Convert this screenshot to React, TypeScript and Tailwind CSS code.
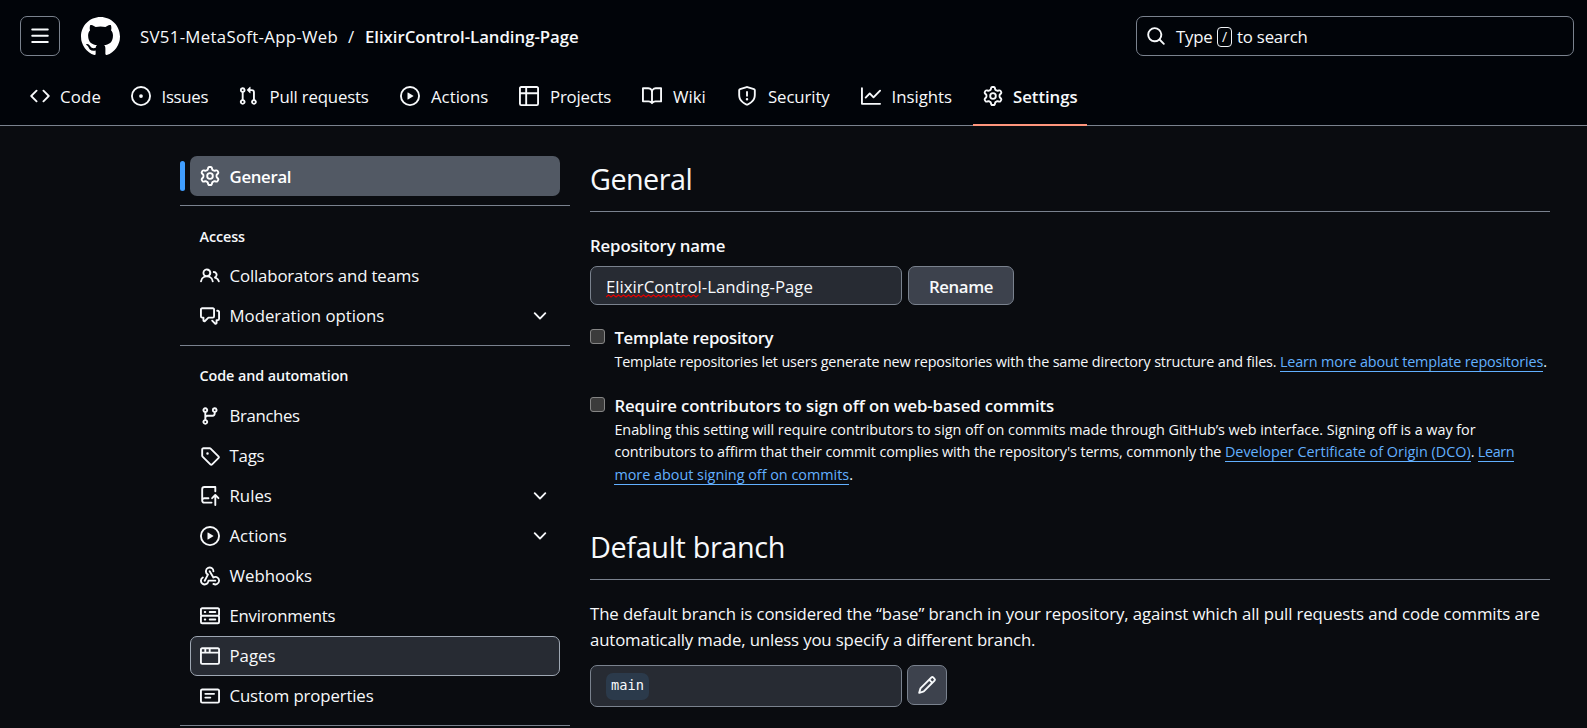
import type { ReactNode } from 'react';

const PATHS = {
  bars: 'M1 2.75A.75.75 0 0 1 1.75 2h12.5a.75.75 0 0 1 0 1.5H1.75A.75.75 0 0 1 1 2.75Zm0 5A.75.75 0 0 1 1.75 7h12.5a.75.75 0 0 1 0 1.5H1.75A.75.75 0 0 1 1 7.75ZM1.75 12h12.5a.75.75 0 0 1 0 1.5H1.75a.75.75 0 0 1 0-1.5Z',
  github:
    'M8 0c4.42 0 8 3.58 8 8a8.013 8.013 0 0 1-5.45 7.59c-.4.08-.55-.17-.55-.38 0-.27.01-1.13.01-2.2 0-.75-.25-1.23-.54-1.48 1.78-.2 3.65-.88 3.65-3.95 0-.88-.31-1.59-.82-2.15.08-.2.36-1.02-.08-2.12 0 0-.67-.22-2.2.82-.64-.18-1.32-.27-2-.27-.68 0-1.36.09-2 .27-1.53-1.03-2.2-.82-2.2-.82-.44 1.1-.16 1.92-.08 2.12-.51.56-.82 1.28-.82 2.15 0 3.06 1.86 3.75 3.64 3.95-.23.2-.44.55-.51 1.07-.46.21-1.61.55-2.33-.66-.15-.24-.6-.83-1.23-.82-.67.01-.27.38.01.53.34.19.73.9.82 1.13.16.45.68 1.31 2.69.94 0 .67.01 1.3.01 1.49 0 .21-.15.45-.55.38A7.995 7.995 0 0 1 0 8c0-4.42 3.58-8 8-8Z',
  search:
    'M10.68 11.74a6 6 0 0 1-7.922-8.982 6 6 0 0 1 8.982 7.922l3.04 3.04a.749.749 0 0 1-.326 1.275.749.749 0 0 1-.734-.215ZM11.5 7a4.499 4.499 0 1 0-8.997 0A4.499 4.499 0 0 0 11.5 7Z',
  code: 'm11.28 3.22 4.25 4.25a.75.75 0 0 1 0 1.06l-4.25 4.25a.749.749 0 0 1-1.275-.326.749.749 0 0 1 .215-.734L13.94 8l-3.72-3.72a.749.749 0 0 1 .326-1.275.749.749 0 0 1 .734.215Zm-6.56 0a.751.751 0 0 1 1.042.018.751.751 0 0 1 .018 1.042L2.06 8l3.72 3.72a.749.749 0 0 1-.326 1.275.749.749 0 0 1-.734-.215L.47 8.53a.75.75 0 0 1 0-1.06Z',
  issue: 'M8 9.5a1.5 1.5 0 1 0 0-3 1.5 1.5 0 0 0 0 3Z M8 0a8 8 0 1 1 0 16A8 8 0 0 1 8 0ZM1.5 8a6.5 6.5 0 1 0 13 0 6.5 6.5 0 0 0-13 0Z',
  pull: 'M1.5 3.25a2.25 2.25 0 1 1 3 2.122v5.256a2.251 2.251 0 1 1-1.5 0V5.372A2.25 2.25 0 0 1 1.5 3.25Zm5.677-.177L9.573.677A.25.25 0 0 1 10 .854V2.5h1A2.5 2.5 0 0 1 13.5 5v5.628a2.251 2.251 0 1 1-1.5 0V5a1 1 0 0 0-1-1h-1v1.646a.25.25 0 0 1-.427.177L7.177 3.427a.25.25 0 0 1 0-.354ZM3.75 2.5a.75.75 0 1 0 0 1.5.75.75 0 0 0 0-1.5Zm0 9.5a.75.75 0 1 0 0 1.5.75.75 0 0 0 0-1.5Zm8.25.75a.75.75 0 1 0 1.5 0 .75.75 0 0 0-1.5 0Z',
  play: 'M8 0a8 8 0 1 1 0 16A8 8 0 0 1 8 0ZM1.5 8a6.5 6.5 0 1 0 13 0 6.5 6.5 0 0 0-13 0Zm4.879-2.773 4.264 2.559a.25.25 0 0 1 0 .428l-4.264 2.559A.25.25 0 0 1 6 10.559V5.442a.25.25 0 0 1 .379-.215Z',
  table:
    'M0 1.75C0 .784.784 0 1.75 0h12.5C15.216 0 16 .784 16 1.75v12.5A1.75 1.75 0 0 1 14.25 16H1.75A1.75 1.75 0 0 1 0 14.25ZM6.5 6.5v8h7.75a.25.25 0 0 0 .25-.25V6.5Zm8-1.5V1.75a.25.25 0 0 0-.25-.25H6.5V5Zm-13 1.5v7.75c0 .138.112.25.25.25H5v-8ZM5 5V1.5H1.75a.25.25 0 0 0-.25.25V5Z',
  book: 'M0 1.75A.75.75 0 0 1 .75 1h4.253c1.227 0 2.317.59 3 1.501A3.743 3.743 0 0 1 11.006 1h4.245a.75.75 0 0 1 .75.75v10.5a.75.75 0 0 1-.75.75h-4.507a2.25 2.25 0 0 0-1.591.659l-.622.621a.75.75 0 0 1-1.06 0l-.622-.621A2.25 2.25 0 0 0 5.258 13H.75a.75.75 0 0 1-.75-.75Zm7.251 10.324.004-5.073-.002-2.253A2.25 2.25 0 0 0 5.003 2.5H1.5v9h3.757a3.75 3.75 0 0 1 1.994.574ZM8.755 4.75l-.004 7.322a3.752 3.752 0 0 1 1.992-.572H14.5v-9h-3.495a2.25 2.25 0 0 0-2.25 2.25Z',
  shield:
    'M7.467.133a1.748 1.748 0 0 1 1.066 0l5.25 1.68A1.75 1.75 0 0 1 15 3.48V7c0 1.566-.32 3.182-1.303 4.682-.983 1.498-2.585 2.813-5.032 3.855a1.697 1.697 0 0 1-1.33 0c-2.447-1.042-4.049-2.357-5.032-3.855C1.32 10.182 1 8.566 1 7V3.48a1.75 1.75 0 0 1 1.217-1.667Zm.61 1.429a.25.25 0 0 0-.153 0l-5.25 1.68a.25.25 0 0 0-.174.238V7c0 1.358.275 2.666 1.057 3.86.784 1.194 2.121 2.34 4.366 3.297a.196.196 0 0 0 .154 0c2.245-.956 3.582-2.104 4.366-3.298C13.225 9.666 13.5 8.36 13.5 7V3.48a.251.251 0 0 0-.174-.237l-5.25-1.68ZM8.75 4.75v3a.75.75 0 0 1-1.5 0v-3a.75.75 0 0 1 1.5 0ZM9 10.5a1 1 0 1 1-2 0 1 1 0 0 1 2 0Z',
  graph:
    'M1.5 1.75V13.5h13.75a.75.75 0 0 1 0 1.5H.75a.75.75 0 0 1-.75-.75V1.75a.75.75 0 0 1 1.5 0Zm14.28 2.53-5.25 5.25a.75.75 0 0 1-1.06 0L7 7.06 4.28 9.78a.751.751 0 0 1-1.042-.018.751.751 0 0 1-.018-1.042l3.25-3.25a.75.75 0 0 1 1.06 0L10 7.94l4.72-4.72a.751.751 0 0 1 1.042.018.751.751 0 0 1 .018 1.042Z',
  gear: 'M8 0a8.2 8.2 0 0 1 .701.031C9.444.095 9.99.645 10.16 1.29l.288 1.107c.018.066.079.158.212.224.231.114.454.243.668.386.123.082.233.09.299.071l1.103-.303c.644-.176 1.392.021 1.82.63.27.385.506.792.704 1.218.315.675.111 1.422-.364 1.891l-.814.806c-.049.048-.098.147-.088.294.016.257.016.515 0 .772-.01.147.038.246.088.294l.814.806c.475.469.679 1.216.364 1.891a7.977 7.977 0 0 1-.704 1.217c-.428.61-1.176.807-1.82.63l-1.102-.302c-.067-.019-.177-.011-.3.071a5.909 5.909 0 0 1-.668.386c-.133.066-.194.158-.211.224l-.29 1.106c-.168.646-.715 1.196-1.458 1.26a8.006 8.006 0 0 1-1.402 0c-.743-.064-1.289-.614-1.458-1.26l-.289-1.106c-.018-.066-.079-.158-.212-.224a5.738 5.738 0 0 1-.668-.386c-.123-.082-.233-.09-.299-.071l-1.103.303c-.644.176-1.392-.021-1.82-.63a8.12 8.12 0 0 1-.704-1.218c-.315-.675-.111-1.422.363-1.891l.815-.806c.05-.048.098-.147.088-.294a6.214 6.214 0 0 1 0-.772c.01-.147-.038-.246-.088-.294l-.815-.806C.635 6.045.431 5.298.746 4.623a7.92 7.92 0 0 1 .704-1.217c.428-.61 1.176-.807 1.82-.63l1.102.302c.067.019.177.011.3-.071.214-.143.437-.272.668-.386.133-.066.194-.158.211-.224l.29-1.106C6.009.645 6.556.095 7.299.03 7.53.01 7.764 0 8 0Zm-.571 1.525c-.036.003-.108.036-.137.146l-.289 1.105c-.147.561-.549.967-.998 1.189-.173.086-.34.183-.5.29-.417.278-.97.423-1.529.27l-1.103-.303c-.109-.03-.175.016-.195.045-.22.312-.412.644-.573.99-.014.031-.021.11.059.19l.815.806c.411.406.562.957.53 1.456a4.709 4.709 0 0 0 0 .582c.032.499-.119 1.05-.53 1.456l-.815.806c-.081.08-.073.159-.059.19.162.346.353.677.573.989.02.03.085.076.195.046l1.102-.303c.56-.153 1.113-.008 1.53.27.161.107.328.204.501.29.447.222.85.629.997 1.189l.289 1.105c.029.109.101.143.137.146a6.6 6.6 0 0 0 1.142 0c.036-.003.108-.036.137-.146l.289-1.105c.147-.561.549-.967.998-1.189.173-.086.34-.183.5-.29.417-.278.97-.423 1.529-.27l1.103.303c.109.029.175-.016.195-.045.22-.313.411-.644.573-.99.014-.031.021-.11-.059-.19l-.815-.806c-.411-.406-.562-.957-.53-1.456a4.709 4.709 0 0 0 0-.582c-.032-.499.119-1.05.53-1.456l.815-.806c.081-.08.073-.159.059-.19a6.464 6.464 0 0 0-.573-.989c-.02-.03-.085-.076-.195-.046l-1.102.303c-.56.153-1.113.008-1.53-.27a4.44 4.44 0 0 0-.501-.29c-.447-.222-.85-.629-.997-1.189l-.289-1.105c-.029-.11-.101-.143-.137-.146a6.6 6.6 0 0 0-1.142 0ZM11 8a3 3 0 1 1-6 0 3 3 0 0 1 6 0ZM9.5 8a1.5 1.5 0 1 0-3.001.001A1.5 1.5 0 0 0 9.5 8Z',
  people:
    'M2 5.5a3.5 3.5 0 1 1 5.898 2.549 5.508 5.508 0 0 1 3.034 4.084.75.75 0 1 1-1.482.235 4 4 0 0 0-7.9 0 .75.75 0 0 1-1.482-.236A5.507 5.507 0 0 1 3.102 8.05 3.493 3.493 0 0 1 2 5.5ZM11 4a3.001 3.001 0 0 1 2.22 5.018 5.01 5.01 0 0 1 2.56 3.012.749.749 0 0 1-.885.954.752.752 0 0 1-.549-.514 3.507 3.507 0 0 0-2.522-2.372.75.75 0 0 1-.574-.73v-.352a.75.75 0 0 1 .416-.672A1.5 1.5 0 0 0 11 5.5.75.75 0 0 1 11 4Zm-5.5-.5a2 2 0 1 0-.001 3.999A2 2 0 0 0 5.5 3.5Z',
  discussion:
    'M1.75 1h8.5c.966 0 1.75.784 1.75 1.75v5.5A1.75 1.75 0 0 1 10.25 10H7.061l-2.574 2.573A1.458 1.458 0 0 1 2 11.543V10h-.25A1.75 1.75 0 0 1 0 8.25v-5.5C0 1.784.784 1 1.75 1ZM1.5 2.75v5.5c0 .138.112.25.25.25h1a.75.75 0 0 1 .75.75v2.19l2.72-2.72a.749.749 0 0 1 .53-.22h3.5a.25.25 0 0 0 .25-.25v-5.5a.25.25 0 0 0-.25-.25h-8.5a.25.25 0 0 0-.25.25Zm13 2a.25.25 0 0 0-.25-.25h-.5a.75.75 0 0 1 0-1.5h.5c.966 0 1.75.784 1.75 1.75v5.5A1.75 1.75 0 0 1 14.25 12H14v1.543a1.458 1.458 0 0 1-2.487 1.03L9.22 12.28a.749.749 0 0 1 .326-1.275.749.749 0 0 1 .734.215l2.22 2.22v-2.19a.75.75 0 0 1 .75-.75h1a.25.25 0 0 0 .25-.25Z',
  branch:
    'M9.5 3.25a2.25 2.25 0 1 1 3 2.122V6A2.5 2.5 0 0 1 10 8.5H6a1 1 0 0 0-1 1v1.128a2.251 2.251 0 1 1-1.5 0V5.372a2.25 2.25 0 1 1 1.5 0v1.836A2.493 2.493 0 0 1 6 7h4a1 1 0 0 0 1-1v-.628A2.25 2.25 0 0 1 9.5 3.25Zm-6 0a.75.75 0 1 0 1.5 0 .75.75 0 0 0-1.5 0Zm8.25-.75a.75.75 0 1 0 0 1.5.75.75 0 0 0 0-1.5ZM4.25 12a.75.75 0 1 0 0 1.5.75.75 0 0 0 0-1.5Z',
  tag: 'M1 7.775V2.75C1 1.784 1.784 1 2.75 1h5.025c.464 0 .91.184 1.238.513l6.25 6.25a1.75 1.75 0 0 1 0 2.474l-5.026 5.026a1.75 1.75 0 0 1-2.474 0l-6.25-6.25A1.752 1.752 0 0 1 1 7.775Zm1.5 0c0 .066.026.13.073.177l6.25 6.25a.25.25 0 0 0 .354 0l5.025-5.025a.25.25 0 0 0 0-.354l-6.25-6.25a.25.25 0 0 0-.177-.073H2.75a.25.25 0 0 0-.25.25ZM6 5a1 1 0 1 1 0 2 1 1 0 0 1 0-2Z',
  push: 'M1 2.5A2.5 2.5 0 0 1 3.5 0h8.75a.75.75 0 0 1 .75.75v3.5a.75.75 0 0 1-1.5 0V1.5h-8a1 1 0 0 0-1 1v6.708A2.493 2.493 0 0 1 3.5 9h3.25a.75.75 0 0 1 0 1.5H3.5a1 1 0 0 0 0 2h5.75a.75.75 0 0 1 0 1.5H3.5A2.5 2.5 0 0 1 1 11.5Zm13.23 7.79-1.24-1.3v6.26a.75.75 0 0 1-1.5 0V8.99l-1.23 1.3a.75.75 0 1 1-1.08-1.04l2.51-2.66a.75.75 0 0 1 1.08 0l2.54 2.66a.75.75 0 0 1-1.08 1.04Z',
  webhook:
    'M5.5 4.25a2.25 2.25 0 0 1 4.5 0 .75.75 0 0 0 1.5 0 3.75 3.75 0 1 0-6.14 2.889l-2.272 4.258a.75.75 0 0 0 1.324.706L7 7.25a.75.75 0 0 0-.309-1.015A2.25 2.25 0 0 1 5.5 4.25Z M7.364 3.607a.75.75 0 0 1 1.03.257l2.608 4.349a3.75 3.75 0 1 1-.628 6.785.75.75 0 0 1 .752-1.299 2.25 2.25 0 1 0-.033-3.88.75.75 0 0 1-1.03-.256L7.107 4.636a.75.75 0 0 1 .257-1.03Z M2.9 8.776A.75.75 0 0 1 2.625 9.8 2.25 2.25 0 1 0 6 11.75a.75.75 0 0 1 .75-.751h5.5a.75.75 0 0 1 0 1.5H7.425a3.751 3.751 0 1 1-5.55-3.998.75.75 0 0 1 1.024.274Z',
  server:
    'M1.75 1h12.5c.966 0 1.75.784 1.75 1.75v4c0 .372-.116.717-.314 1 .198.283.314.628.314 1v4a1.75 1.75 0 0 1-1.75 1.75H1.75A1.75 1.75 0 0 1 0 12.75v-4c0-.358.109-.707.314-1a1.739 1.739 0 0 1-.314-1v-4C0 1.784.784 1 1.75 1ZM1.5 2.75v4c0 .138.112.25.25.25h12.5a.25.25 0 0 0 .25-.25v-4a.25.25 0 0 0-.25-.25H1.75a.25.25 0 0 0-.25.25Zm.25 5.75a.25.25 0 0 0-.25.25v4c0 .138.112.25.25.25h12.5a.25.25 0 0 0 .25-.25v-4a.25.25 0 0 0-.25-.25ZM7 4.75A.75.75 0 0 1 7.75 4h4.5a.75.75 0 0 1 0 1.5h-4.5A.75.75 0 0 1 7 4.75ZM7.75 10h4.5a.75.75 0 0 1 0 1.5h-4.5a.75.75 0 0 1 0-1.5ZM3 4.75A.75.75 0 0 1 3.75 4h.5a.75.75 0 0 1 0 1.5h-.5A.75.75 0 0 1 3 4.75ZM3.75 10h.5a.75.75 0 0 1 0 1.5h-.5a.75.75 0 0 1 0-1.5Z',
  browser:
    'M0 2.75C0 1.784.784 1 1.75 1h12.5c.966 0 1.75.784 1.75 1.75v10.5A1.75 1.75 0 0 1 14.25 15H1.75A1.75 1.75 0 0 1 0 13.25ZM14.5 6h-13v7.25c0 .138.112.25.25.25h12.5a.25.25 0 0 0 .25-.25Zm-6-3.5v2h6V2.75a.25.25 0 0 0-.25-.25ZM5 2.5v2h2v-2Zm-3.25 0a.25.25 0 0 0-.25.25V4.5h2v-2Z',
  note: 'M0 3.75C0 2.784.784 2 1.75 2h12.5c.966 0 1.75.784 1.75 1.75v8.5A1.75 1.75 0 0 1 14.25 14H1.75A1.75 1.75 0 0 1 0 12.25Zm1.75-.25a.25.25 0 0 0-.25.25v8.5c0 .138.112.25.25.25h12.5a.25.25 0 0 0 .25-.25v-8.5a.25.25 0 0 0-.25-.25ZM3.5 6.25a.75.75 0 0 1 .75-.75h7a.75.75 0 0 1 0 1.5h-7a.75.75 0 0 1-.75-.75Zm.75 2.25h4a.75.75 0 0 1 0 1.5h-4a.75.75 0 0 1 0-1.5Z',
  chevron: 'M12.78 5.22a.749.749 0 0 1 0 1.06l-4.25 4.25a.749.749 0 0 1-1.06 0L3.22 6.28a.749.749 0 1 1 1.06-1.06L8 8.939l3.72-3.719a.749.749 0 0 1 1.06 0Z',
  pencil:
    'M11.013 1.427a1.75 1.75 0 0 1 2.474 0l1.086 1.086a1.75 1.75 0 0 1 0 2.474l-8.61 8.61c-.21.21-.47.364-.756.445l-3.251.93a.75.75 0 0 1-.927-.928l.929-3.25c.081-.286.235-.547.445-.758l8.61-8.61Zm.176 4.823L9.75 4.81l-6.286 6.287a.253.253 0 0 0-.064.108l-.558 1.953 1.953-.558a.253.253 0 0 0 .108-.064Zm1.238-3.763a.25.25 0 0 0-.354 0L10.811 3.75l1.439 1.44 1.263-1.263a.25.25 0 0 0 0-.354Z',
};

type IconName = keyof typeof PATHS;

function Icon({ name, className = 'size-5' }: { name: IconName; className?: string }) {
  return (
    <svg viewBox="0 0 16 16" fill="currentColor" aria-hidden="true" className={`shrink-0 ${className}`}>
      <path fillRule={name === 'webhook' ? 'nonzero' : 'evenodd'} d={PATHS[name]} />
    </svg>
  );
}

const tabs: { icon: IconName; label: string; box: string; text?: string }[] = [
  { icon: 'code', label: 'Code', box: 'w-[101px]', text: 'tracking-[0.2px]' },
  { icon: 'issue', label: 'Issues', box: 'w-[107px]', text: 'pl-[0.5px] tracking-[-0.3px]' },
  { icon: 'pull', label: 'Pull requests', box: 'w-[162px]', text: 'pl-[1.5px] tracking-[-0.18px]' },
  { icon: 'play', label: 'Actions', box: 'w-[119px]', text: 'pl-px' },
  { icon: 'table', label: 'Projects', box: 'w-[123px]', text: 'pl-px tracking-[-0.2px]' },
  { icon: 'book', label: 'Wiki', box: 'w-[95px]', text: 'pl-px' },
  { icon: 'shield', label: 'Security', box: 'w-[124px]', text: 'pl-px tracking-[-0.1px]' },
  { icon: 'graph', label: 'Insights', box: 'w-[122px]', text: 'pl-[0.5px]' },
];

function Header() {
  return (
    <header className="flex h-[126px] flex-col border-b border-[#7a828e] bg-[#010409]">
      <div className="flex h-[72px] items-center pt-4 pr-[13px] pb-4 pl-5">
        <button className="flex size-10 items-center justify-center rounded-[7px] border border-[#7a828e]">
          <Icon name="bars" />
        </button>
        <Icon name="github" className="ml-[21px] size-10 pt-px pr-px text-white" />
        <div className="ml-[19px] flex items-center pt-0.5 leading-10">
          <span className="w-[208px] tracking-[0.31px]">SV51-MetaSoft-App-Web</span>
          <span className="w-[17px]">/</span>
          <span className="font-semibold tracking-[-0.04px]">ElixirControl-Landing-Page</span>
        </div>
        <div className="ml-auto flex h-10 w-[438px] items-center rounded-[7px] border border-[#7a828e] pl-[9px]">
          <Icon name="search" />
          <span className="ml-2.5 w-[41px] pt-0.5 tracking-[-0.2px]">Type</span>
          <span className="mt-0.5 flex h-5 w-[15px] items-center justify-center rounded-[4px] border border-[#f0f3f6] text-[14px] leading-none">/</span>
          <span className="ml-[5px] pt-0.5 tracking-[-0.2px]">to search</span>
        </div>
      </div>
      <nav className="flex h-[54px] shrink-0 items-start pl-5">
        {tabs.map((t) => (
          <a key={t.label} className={`flex h-12 shrink-0 items-center gap-2.5 pl-2.5 ${t.box}`}>
            <Icon name={t.icon} />
            <span className={`pt-0.5 whitespace-nowrap ${t.text ?? ''}`}>{t.label}</span>
          </a>
        ))}
        <a className="flex h-[54px] w-[114px] items-start border-b-2 border-[#ff967d] pl-2.5">
          <span className="flex h-12 items-center gap-2.5 font-semibold tracking-[-0.05px]">
            <Icon name="gear" />
            <span className="pt-0.5">Settings</span>
          </span>
        </a>
      </nav>
    </header>
  );
}

function NavItem({ icon, label, text = '', more, hovered }: { icon: IconName; label: string; text?: string; more?: boolean; hovered?: boolean }) {
  const look = hovered ? 'border-[#9ea7b3] bg-[#272b33]' : 'border-transparent';
  return (
    <a className={`mx-2.5 flex h-10 items-center rounded-[7px] border px-[9px] ${look}`}>
      <Icon name={icon} />
      <span className={`ml-[9.5px] ${text}`}>{label}</span>
      {more && <Icon name="chevron" className="ml-auto size-5" />}
    </a>
  );
}

function GroupTitle({ children, line }: { children: ReactNode; line: string }) {
  return <h3 className={`h-10 pl-[19.5px] text-[14.4px] font-semibold tracking-[-0.1px] ${line}`}>{children}</h3>;
}

function Sidebar() {
  return (
    <aside className="w-[390px] shrink-0 pt-[30px]">
      <div className="flex h-10 items-center">
        <span className="h-[30px] w-[5px] rounded-[3px] bg-[#409eff]" />
        <a className="mr-2.5 ml-[5px] flex h-10 flex-1 items-center gap-[9.5px] rounded-[7px] bg-[#525964] pl-2.5 font-semibold tracking-[-0.3px] text-white">
          <Icon name="gear" />
          <span className="pt-px">General</span>
        </a>
      </div>
      <hr className="mt-[9px] mb-[10px] border-[#7a828e]" />
      <GroupTitle line="leading-[41px]">Access</GroupTitle>
      <NavItem icon="people" label="Collaborators and teams" text="tracking-[-0.14px]" />
      <NavItem icon="discussion" label="Moderation options" text="tracking-[-0.01px]" more />
      <hr className="mt-[9px] mb-[10px] border-[#7a828e]" />
      <GroupTitle line="leading-10">Code and automation</GroupTitle>
      <NavItem icon="branch" label="Branches" text="tracking-[-0.35px]" />
      <NavItem icon="tag" label="Tags" text="tracking-[-0.2px]" />
      <NavItem icon="push" label="Rules" more />
      <NavItem icon="play" label="Actions" more />
      <NavItem icon="webhook" label="Webhooks" />
      <NavItem icon="server" label="Environments" text="tracking-[-0.25px]" />
      <NavItem icon="browser" label="Pages" hovered />
      <NavItem icon="note" label="Custom properties" text="tracking-[-0.13px]" />
      <hr className="mt-[9px] border-[#7a828e]" />
    </aside>
  );
}

function Link({ children, className = '' }: { children: ReactNode; className?: string }) {
  return <a className={`inline-block h-[19px] border-b border-[#62b0ff] leading-[18px] text-[#62b0ff] ${className}`}>{children}</a>;
}

function CheckRow({ title, titleClass, children }: { title: string; titleClass: string; children: ReactNode }) {
  return (
    <div className="flex">
      <span className="mt-[5px] size-[15px] shrink-0 rounded-[3px] border border-[#858585] bg-[#3b3b3b]" />
      <div className="ml-[9.4px]">
        <div className={`h-[26.6px] leading-[28px] font-semibold ${titleClass}`}>{title}</div>
        <div className="text-[14.4px] leading-[22.5px]">{children}</div>
      </div>
    </div>
  );
}

function Main() {
  return (
    <main className="ml-5 w-[960px] pt-[30px]">
      <h2 className="h-[56px] border-b border-[#7a828e] text-[28.8px] leading-[46px] tracking-[-0.55px]">General</h2>
      <div className="mt-[21px] h-[26px] leading-[26px] font-semibold tracking-[-0.15px]">Repository name</div>
      <div className="mt-[7px] flex gap-1.5">
        <div className="flex h-[39px] w-[312px] items-center rounded-[7px] border border-[#7a828e] bg-[#272b33] pt-0.5 pl-[15px]">
          <span className="relative">
            ElixirControl
            <svg className="absolute top-5 left-0 h-1 w-[93px]" viewBox="0 0 93 4" fill="none" aria-hidden="true">
              <path d="M0 3 L2.5 1 L5 3 L7.5 1 L10 3 L12.5 1 L15 3 L17.5 1 L20 3 L22.5 1 L25 3 L27.5 1 L30 3 L32.5 1 L35 3 L37.5 1 L40 3 L42.5 1 L45 3 L47.5 1 L50 3 L52.5 1 L55 3 L57.5 1 L60 3 L62.5 1 L65 3 L67.5 1 L70 3 L72.5 1 L75 3 L77.5 1 L80 3 L82.5 1 L85 3 L87.5 1 L90 3 L92.5 1" stroke="#e00000" strokeWidth="1.2" />
            </svg>
          </span>
          <span>-Landing-Page</span>
        </div>
        <button className="h-[39px] w-[106px] rounded-[7px] border border-[#7a828e] bg-[#3d424d] pt-0.5 font-semibold tracking-[-0.4px]">Rename</button>
      </div>
      <div className="mt-[19px] h-[68px]">
        <CheckRow title="Template repository" titleClass="tracking-[-0.28px]">
          <div className="flex pt-[0.4px] whitespace-nowrap">
            <span className="w-[665.5px] tracking-[-0.16px]">
              Template repositories let users generate new repositories with the same directory structure and files.
            </span>
            <Link className="mt-0.5 tracking-[-0.15px]">Learn more about template repositories</Link>.
          </div>
        </CheckRow>
      </div>
      <CheckRow title="Require contributors to sign off on web-based commits" titleClass="tracking-[-0.11px]">
        <div className="tracking-[-0.037px] whitespace-nowrap">
          Enabling this setting will require contributors to sign off on commits made through GitHub’s web interface. Signing off is a way for
        </div>
        <div className="flex whitespace-nowrap">
          <span className="w-[610.5px] tracking-[-0.11px]">
            contributors to affirm that their commit complies with the repository's terms, commonly the
          </span>
          <Link className="mt-0.5">Developer Certificate of Origin (DCO)</Link>
          <span className="w-[7px]">.</span>
          <Link className="mt-0.5 tracking-[-0.35px]">Learn</Link>
        </div>
        <div className="flex whitespace-nowrap">
          <Link className="mt-0.5 tracking-[-0.01px]">more about signing off on commits</Link>.
        </div>
      </CheckRow>
      <h2 className="mt-[38.4px] h-[56px] border-b border-[#7a828e] text-[28.8px] leading-[46px] tracking-[-0.35px]">Default branch</h2>
      <p className="mt-[21px] leading-[26px] whitespace-nowrap">
        <span className="block tracking-[-0.11px]">
          The default branch is considered the “base” branch in your repository, against which all pull requests and code commits are
        </span>
        <span className="block tracking-[-0.15px]">automatically made, unless you specify a different branch.</span>
      </p>
      <div className="mt-3 flex items-start gap-[5px]">
        <div className="flex h-[42px] w-[312px] items-center rounded-[7px] border border-[#7a828e] bg-[#272b33] pl-[15px]">
          <span className="flex h-[27px] w-[43px] items-center justify-center rounded-[7px] bg-[#2b3a4b] pb-0.5 font-['DejaVu_Sans_Mono',monospace] text-[13.7px]">
            main
          </span>
        </div>
        <button className="flex size-10 items-center justify-center rounded-[7px] border border-[#7a828e] bg-[#3d424d]">
          <Icon name="pencil" />
        </button>
      </div>
    </main>
  );
}

export default function App() {
  return (
    <div className="flex h-[728px] w-[1587px] flex-col overflow-hidden bg-[#0a0c10] font-['Open_Sans',sans-serif] text-[16.8px] text-[#f7f9fb]">
      <Header />
      <div className="flex pl-[180px]">
        <Sidebar />
        <Main />
      </div>
    </div>
  );
}
